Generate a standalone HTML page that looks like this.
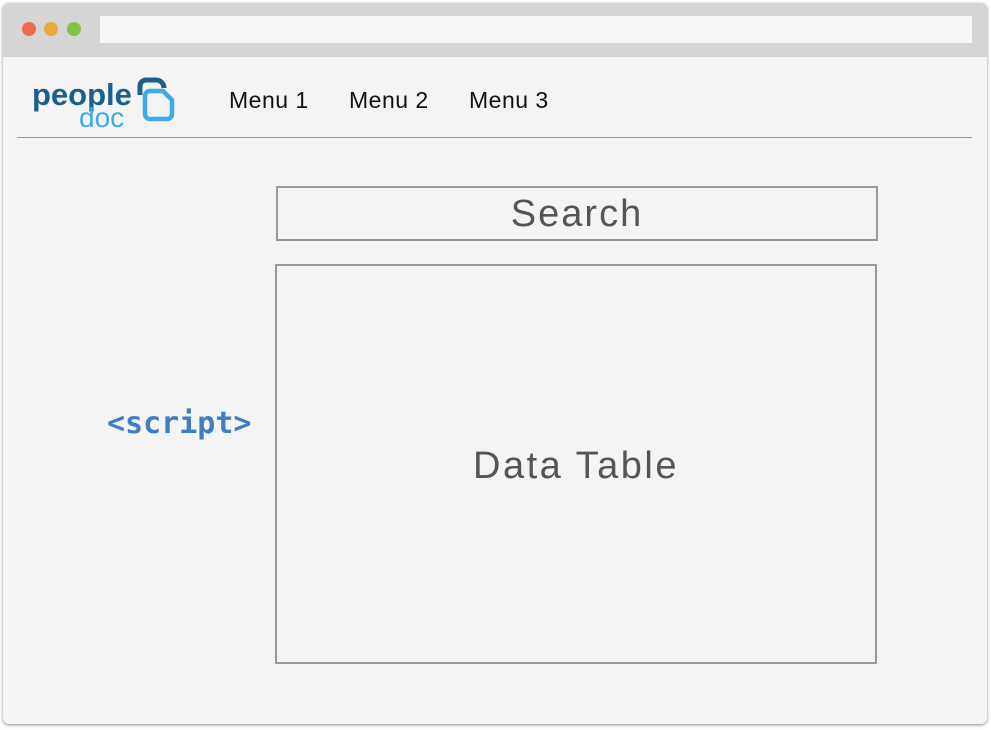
<!DOCTYPE html>
<html><head><style>
body{margin:0;width:991px;height:730px;background:#fff;position:relative;overflow:hidden;font-family:"Liberation Sans",sans-serif}
.win{position:absolute;left:3px;top:3px;width:984px;height:721px;background:#f4f4f4;border-radius:6px;box-shadow:0 1px 3px rgba(0,0,0,.45);overflow:hidden}
.bar{position:absolute;left:0;top:0;width:100%;height:54px;background:#d5d5d5}
.dot{position:absolute;top:19px;width:14px;height:14px;border-radius:50%}
.url{position:absolute;left:97px;top:13px;width:872px;height:27px;background:#f6f6f6}
.abs{position:absolute}
.menu{position:absolute;top:84px;font-size:23px;color:#111;letter-spacing:0.5px}
.box{position:absolute;border:2px solid #999;box-sizing:border-box;color:#555;display:flex;align-items:center;justify-content:center}
</style></head><body>
<div class="win">
<div class="bar"></div>
<div class="dot" style="left:19px;background:#ea6b4d"></div>
<div class="dot" style="left:41px;background:#e8aa3a"></div>
<div class="dot" style="left:64px;background:#84c441"></div>
<div class="url"></div>
<div class="abs" style="left:29px;top:74px;font-size:31px;font-weight:bold;color:#1b5f8c;letter-spacing:0px">people</div>
<div class="abs" style="left:76px;top:99px;font-size:28px;color:#3eaae6;letter-spacing:0px">doc</div>
<svg class="abs" style="left:130px;top:72px" width="45" height="48" viewBox="0 0 45 48">
<path d="M7 20 V11 a6 6 0 0 1 6-6 h10 a8 8 0 0 1 8 8" fill="none" stroke="#1b5f8c" stroke-width="5"/>
<path d="M12 21 a5 5 0 0 1 5-5 h13 l9 9 v14 a5 5 0 0 1-5 5 h-17 a5 5 0 0 1-5-5z" fill="none" stroke="#3eaae6" stroke-width="4.5"/>
</svg>
<div class="menu" style="left:226px">Menu 1</div>
<div class="menu" style="left:346px">Menu 2</div>
<div class="menu" style="left:466px">Menu 3</div>
<div class="abs" style="left:14px;top:134px;width:955px;height:1px;background:#999"></div>
<div class="box" style="left:273px;top:183px;width:602px;height:55px;font-size:38px;letter-spacing:2px;padding-top:2px">Search</div>
<div class="box" style="left:272px;top:261px;width:602px;height:400px;font-size:38px;letter-spacing:2.5px;padding-top:4px">Data Table</div>
<div class="abs" style="left:104px;top:403px;font-family:'DejaVu Sans Mono','Liberation Mono',monospace;font-weight:bold;font-size:30px;color:#3f7fc0">&lt;script&gt;</div>
</div>
</body></html>
